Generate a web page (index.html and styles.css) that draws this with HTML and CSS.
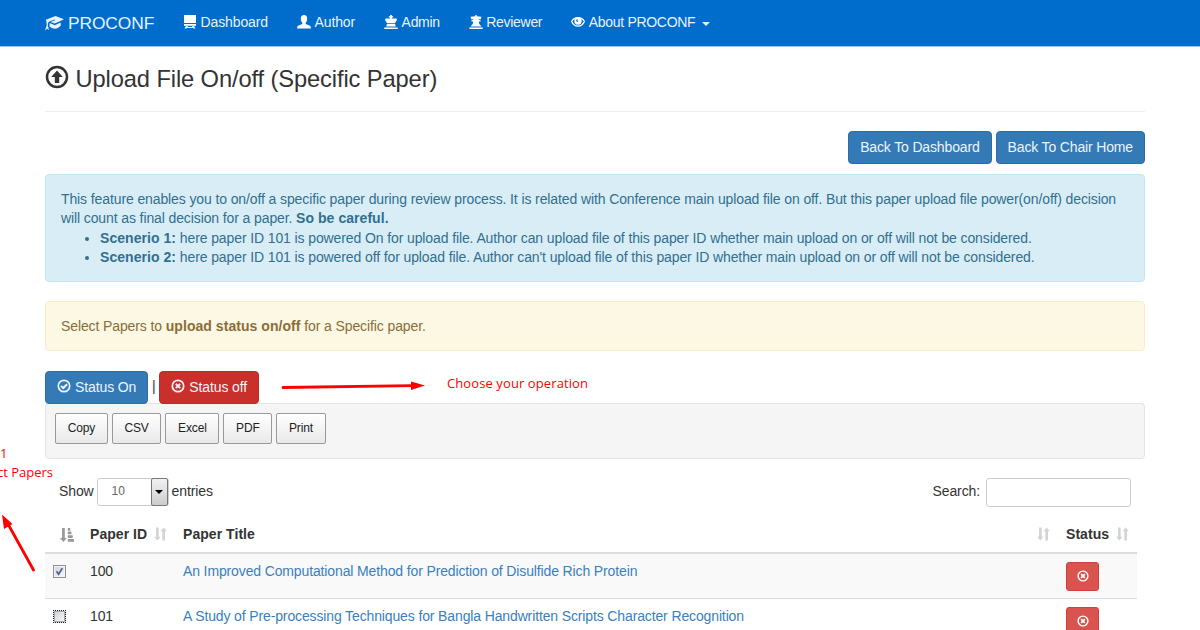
FILE: index.html
```html
<!DOCTYPE html>
<html lang="en">
<head>
    <meta charset="UTF-8">
    <meta name="viewport" content="width=device-width, initial-scale=1.0">
    <title>PROCONF - Upload File On/off</title>
    <link rel="stylesheet" href="styles.css">
</head>
<body>
    <!-- Icon set -->
    <svg class="sprite">
        <symbol id="remove-circle" viewBox="0 0 14 14">
            <circle cx="7" cy="7" r="5.7" fill="none" stroke="currentColor" stroke-width="1.7"/>
            <path d="M4.8 4.8l4.4 4.4M9.2 4.8L4.8 9.2" stroke="currentColor" stroke-width="1.9"/>
        </symbol>
        <symbol id="ok-circle" viewBox="0 0 14 14">
            <circle cx="7" cy="7" r="5.7" fill="none" stroke="currentColor" stroke-width="1.7"/>
            <path d="M4 6.9l2.3 2.2 3.8-3.8" fill="none" stroke="currentColor" stroke-width="2.1"/>
        </symbol>
        <symbol id="sort" viewBox="0 0 14 14">
            <path d="M2.2 0h2.800v10H7l-3.400 4L.2 10h2zM9 14V4H7l3.400-4 3.400 4h-2v10z" fill="currentColor"/>
        </symbol>
        <symbol id="sort-asc" viewBox="0 0 14 14">
            <path d="M2 0h2.800v10h2l-3.400 4L0 10h2zM7.800 0h2.400v2.700H7.800zM7.800 3.600h3.600v2.700H7.800zM7.800 7.300h4.900V10H7.800zM7.800 11H14v2.700H7.800z" fill="currentColor"/>
        </symbol>
    </svg>

    <nav class="navbar">
        <a href="#" class="brand">
            <svg class="brand-icon" viewBox="0 0 19 16">
                <path d="M.8 4.800L10.500 1 19 4.300 9.800 8.600 5.600 6.900 10 5.200 9.800 4.400 4.200 6.400 3 8l-.2 2.600L4 15 2.400 13.800 0 15.200 1.700 10.600 1.500 7.300z" fill="currentColor"/>
                <path d="M4.600 8.100l5.200 2.100 5.800-2.700.3 2.800q-2.600 3.400-6 3.400-3.400-.1-5.400-2.200z" fill="currentColor"/>
            </svg>
            <span>PROCONF</span>
        </a>
        <ul class="nav-links">
            <li><a href="#">
                <svg class="nav-icon" viewBox="0 0 14 14"><path d="M1 0h12v8H1zM1 9h12v1.700H1zM3 11h2l-.6 1h5.200L9 11h2l1.500 2.600h-2l-.3-.6H3.800l-.3.6h-2z" fill="currentColor"/></svg>
                <span>Dashboard</span>
            </a></li>
            <li><a href="#">
                <svg class="nav-icon" viewBox="0 0 14 14"><path d="M7 0c2.200 0 3.200 1.600 3.200 3.700 0 2-.7 3.200-1.500 4v1.200l4.300 1.900q1 .5 1 2.700H0q0-2.200 1-2.700l4.300-1.900V7.700c-.8-.8-1.500-2-1.500-4C3.800 1.600 4.800 0 7 0z" fill="currentColor"/></svg>
                <span>Author</span>
            </a></li>
            <li class="tight"><a href="#">
                <svg class="nav-icon" viewBox="0 0 14 14"><path d="M6.100 0h1.800v1.200h1.300v1.200H7.900v1h4.400q1.200.8.300 2.300L11 8H3L1.400 5.700Q.5 4.200 1.700 3.400h4.400v-1H4.800V1.200h1.300zM3 8.700h8l.8 2.800H2.200zM.3 12.400h13.400V14H.3z" fill="currentColor"/></svg>
                <span>Admin</span>
            </a></li>
            <li class="tight"><a href="#">
                <svg class="nav-icon" viewBox="0 0 14 14"><path d="M6.300 0h1.400v1.200l4.800.5-.8 2.500H9.800v.8h1.700v1.500H9.700l.6 2.500 2.200 2.500h-11l2.200-2.500.6-2.500H2.500V5h1.700v-.8H2.300l-.8-2.500 4.800-.5zM.3 12.400h13.400V14H.3z" fill="currentColor"/></svg>
                <span>Reviewer</span>
            </a></li>
            <li class="tight"><a href="#">
                <svg class="nav-icon" viewBox="0 0 14 14"><path d="M.6 6.500C3.400 1.400 10.600 1.400 13.400 6.500 10.600 12.600 3.400 12.600.6 6.500z" fill="none" stroke="currentColor" stroke-width="1.300"/><circle cx="7" cy="6" r="3.700" fill="currentColor"/><path d="M5 5.700Q5.200 4 6.800 4.200 6 5.400 7.300 6.400 5.800 7.600 5 5.700z" fill="#006dcc"/></svg>
                <span>About PROCONF</span>
                <i class="caret"></i>
            </a></li>
        </ul>
    </nav>

    <main class="container">
        <h3 class="page-title">
            <svg class="title-icon" viewBox="0 0 24 24">
                <circle cx="12" cy="12" r="10" fill="none" stroke="currentColor" stroke-width="2.500"/>
                <path d="M12 5.500l5.800 6.500h-3.600v6H9.800v-6H6.200z" fill="currentColor"/>
            </svg>
            <span>Upload File On/off (Specific Paper)</span>
        </h3>

        <div class="page-actions">
            <a href="#" class="btn btn-primary">Back To Dashboard</a>
            <a href="#" class="btn btn-primary">Back To Chair Home</a>
        </div>

        <div class="alert alert-info">
            <p>This feature enables you to on/off a specific paper during review process. It is related with Conference main upload file on off. But this paper upload file power(on/off) decision</p>
            <p>will count as final decision for a paper. <b>So be careful.</b></p>
            <ul>
                <li><b>Scenerio 1:</b> here paper ID 101 is powered On for upload file. Author can upload file of this paper ID whether main upload on or off will not be considered.</li>
                <li><b>Scenerio 2:</b> here paper ID 101 is powered off for upload file. Author can't upload file of this paper ID whether main upload on or off will not be considered.</li>
            </ul>
        </div>

        <div class="alert alert-warning">
            Select Papers to <b>upload status on/off</b> for a Specific paper.
        </div>

        <div class="status-actions">
            <button class="btn btn-primary"><svg class="btn-icon"><use href="#ok-circle"/></svg>Status On</button>
            <span class="divider">|</span>
            <button class="btn btn-danger"><svg class="btn-icon"><use href="#remove-circle"/></svg>Status off</button>
        </div>

        <div class="export-bar">
            <button class="btn-export">Copy</button>
            <button class="btn-export">CSV</button>
            <button class="btn-export">Excel</button>
            <button class="btn-export">PDF</button>
            <button class="btn-export">Print</button>
        </div>

        <div class="table-tools">
            <div class="tool">
                <span>Show</span>
                <div class="select"><span>10</span><i class="select-arrow"></i></div>
                <span>entries</span>
            </div>
            <label class="tool search">Search: <input type="text"></label>
        </div>

        <table class="papers">
            <colgroup><col class="col-check"><col class="col-id"><col><col class="col-status"></colgroup>
            <thead>
                <tr>
                    <th><div class="th"><svg class="sort-icon active"><use href="#sort-asc"/></svg></div></th>
                    <th><div class="th">Paper ID<svg class="sort-icon"><use href="#sort"/></svg></div></th>
                    <th><div class="th">Paper Title<svg class="sort-icon"><use href="#sort"/></svg></div></th>
                    <th><div class="th">Status<svg class="sort-icon"><use href="#sort"/></svg></div></th>
                </tr>
            </thead>
            <tbody>
                <tr>
                    <td><span class="checkbox"><svg viewBox="0 0 13 13"><path d="M3 6.300l2.400 3.400L9.900 2.500" fill="none" stroke="#4a5f97" stroke-width="2"/></svg></span></td>
                    <td>100</td>
                    <td><a href="#">An Improved Computational Method for Prediction of Disulfide Rich Protein</a></td>
                    <td><button class="btn-off"><svg><use href="#remove-circle"/></svg></button></td>
                </tr>
                <tr>
                    <td><span class="checkbox focused"></span></td>
                    <td>101</td>
                    <td><a href="#">A Study of Pre-processing Techniques for Bangla Handwritten Scripts Character Recognition</a></td>
                    <td><button class="btn-off"><svg><use href="#remove-circle"/></svg></button></td>
                </tr>
            </tbody>
        </table>
    </main>

    <!-- Step notes drawn over the page -->
    <div class="note note-operation">Choose your operation</div>
    <div class="note note-step">1</div>
    <div class="note note-select">ct Papers</div>
    <svg class="arrows" viewBox="0 0 1200 630">
        <path d="M283 387.500L412 385.700M33.500 570L8 524" stroke="#f00" stroke-width="2.800" stroke-linecap="round"/>
        <path d="M411 381.500L425 385.500 411 390zM2 514.500l10.500 9.500-8.500 5z" fill="#f00"/>
    </svg>
</body>
</html>
```
FILE: styles.css
```css
* {
    margin: 0;
    padding: 0;
    box-sizing: border-box;
}

body {
    width: 1200px;
    height: 630px;
    overflow: hidden;
    position: relative;
    background: #fff;
    color: #333;
    font-family: "Liberation Sans", Arial, sans-serif;
    font-size: 14px;
    line-height: 19.3px;
    letter-spacing: -0.11px;
}

a {
    color: #3a80bc;
    text-decoration: none;
}

b,
th {
    letter-spacing: 0.05px;
}

button {
    font-family: inherit;
    letter-spacing: inherit;
}

.sprite {
    display: none;
}

/* Navbar */
.navbar {
    height: 47px;
    padding: 0 45px;
    display: flex;
    background: #006dcc;
    border-bottom: 1px solid #9ec6ea;
}

.navbar a {
    color: #e8f2fb;
    display: flex;
    align-items: center;
}

.brand {
    width: 138px;
    gap: 4px;
    padding-top: 1px;
    font-size: 17.4px;
}

.brand-icon {
    width: 19px;
    height: 16px;
    margin-top: -2px;
}

.nav-links {
    display: flex;
    gap: 29px;
    list-style: none;
}

.nav-links a {
    height: 45px;
    gap: 3.500px;
}

.nav-links .tight {
    letter-spacing: -0.3px;
}

.nav-icon {
    width: 14px;
    height: 14px;
    margin-top: -2px;
    color: #fff;
}

.caret {
    margin: 2px 0 0 3px;
    border: 4px solid transparent;
    border-top-color: #e8f2fb;
    border-bottom: 0;
}

/* Page header */
.container {
    padding: 0 55px 0 45px;
}

.page-title {
    height: 65px;
    padding-top: 1px;
    display: flex;
    align-items: center;
    gap: 6.500px;
    border-bottom: 1px solid #eee;
    font-size: 23.700px;
    font-weight: normal;
}

.title-icon {
    width: 24px;
    height: 24px;
    margin-top: -6px;
}

.page-actions {
    display: flex;
    justify-content: flex-end;
    gap: 4px;
    margin: 19px 0 10px;
    letter-spacing: -0.15px;
}

.btn {
    height: 33px;
    padding: 0 11px;
    display: inline-flex;
    align-items: center;
    border: 1px solid #2e6da4;
    border-radius: 4px;
    color: #eef4f9;
    font-size: 14px;
    white-space: nowrap;
}

.btn-primary {
    background: #337ab7;
}

.btn-danger {
    background: #c9302c;
    border-color: #b92c28;
}

.btn-icon {
    width: 14px;
    height: 14px;
    margin: -2px 4px 0 0;
}

/* Alerts */
.alert {
    padding: 15px;
    border: 1px solid;
    border-radius: 4px;
    white-space: nowrap;
}

.alert-info {
    height: 108px;
    color: #31708f;
    background: #d9edf7;
    border-color: #bce8f1;
}

.alert-info ul {
    padding-left: 39px;
}

.alert-warning {
    height: 50px;
    margin: 19px 0 20px;
    color: #8a6d3b;
    background: #fcf8e3;
    border-color: #faebcc;
}

/* Toolbar */
.status-actions {
    display: flex;
    align-items: center;
    height: 32px;
}

.divider {
    width: 11px;
    text-align: center;
}

.export-bar {
    height: 56px;
    padding: 9px;
    display: flex;
    gap: 4px;
    background: #f5f5f5;
    border: 1px solid #e3e3e3;
    border-radius: 4px;
}

.btn-export {
    height: 31px;
    padding: 0 11.700px 1px;
    border: 1px solid #999;
    border-radius: 2px;
    background: linear-gradient(#fff, #e9e9e9);
    color: #222;
    font-size: 12px;
    letter-spacing: -0.15px;
}

.table-tools {
    height: 28px;
    margin-top: 19px;
    padding: 0 14px;
    display: flex;
    justify-content: space-between;
}

.tool {
    display: flex;
    align-items: center;
    gap: 3px;
}

.select {
    width: 72px;
    height: 28px;
    padding-left: 14px;
    display: flex;
    align-items: center;
    justify-content: space-between;
    border: 1px solid #ccc;
    border-radius: 3px;
    color: #666;
    font-size: 12px;
}

.select-arrow {
    width: 17px;
    height: 28px;
    display: flex;
    align-items: center;
    justify-content: center;
    background: linear-gradient(#f2f2f2, #ccc);
    border: 1px solid #777;
    border-radius: 2px;
}

.select-arrow::after {
    content: '';
    border: 4px solid transparent;
    border-top-color: #000;
    border-bottom: 0;
}

.search {
    gap: 6px;
}

.search input {
    width: 145px;
    height: 29px;
    border: 1px solid #ccc;
    border-radius: 3px;
}

/* Papers table */
.papers {
    width: 1092px;
    margin-top: 9px;
    table-layout: fixed;
    border-collapse: collapse;
}

.col-check {
    width: 37px;
}

.col-id {
    width: 93px;
}

.col-status {
    width: 79px;
}

.papers th {
    height: 38px;
    padding: 2px 8px 0;
    border-bottom: 2px solid #ddd;
}

.th {
    display: flex;
    align-items: center;
    justify-content: space-between;
}

.sort-icon {
    width: 13px;
    height: 14px;
    margin-left: auto;
    color: #d3d3d3;
}

.sort-icon.active {
    width: 14px;
    color: #999;
}

.papers td {
    height: 45.500px;
    padding: 8px 8px 0;
    vertical-align: top;
    border-bottom: 1px solid #ddd;
}

.papers td a {
    letter-spacing: -0.13px;
}

.papers tbody tr:first-child {
    background: #f9f9f9;
}

.checkbox {
    width: 13px;
    height: 13px;
    margin-top: 3px;
    display: block;
    background: linear-gradient(135deg, #ccd1d8, #fafafa);
    border: 1px solid #8e8f8f;
    box-shadow: inset 0 0 0 1px #f4f4f4;
}

.checkbox svg {
    width: 11px;
    height: 11px;
    display: block;
}

.checkbox.focused {
    border: 1px dotted #222;
    box-shadow: inset 0 0 0 1px #aaa;
}

.btn-off {
    width: 33px;
    height: 29px;
    display: flex;
    align-items: center;
    justify-content: center;
    background: #d9534f;
    border: 1px solid #d43f3a;
    border-radius: 3px;
    color: #fff;
}

.btn-off svg {
    width: 12px;
    height: 12px;
    margin-top: -2px;
}

/* Notes */
.note {
    position: absolute;
    color: #f00;
    font-family: "Open Sans", sans-serif;
    font-size: 13px;
    letter-spacing: 0;
    white-space: nowrap;
}

.note-operation {
    left: 447px;
    top: 374px;
    letter-spacing: 0.1px;
}

.note-step {
    left: 0;
    top: 444px;
}

.note-select {
    right: 1147px;
    top: 463px;
}

.arrows {
    position: absolute;
    left: 0;
    top: 0;
    width: 1200px;
    height: 630px;
    pointer-events: none;
}
```
